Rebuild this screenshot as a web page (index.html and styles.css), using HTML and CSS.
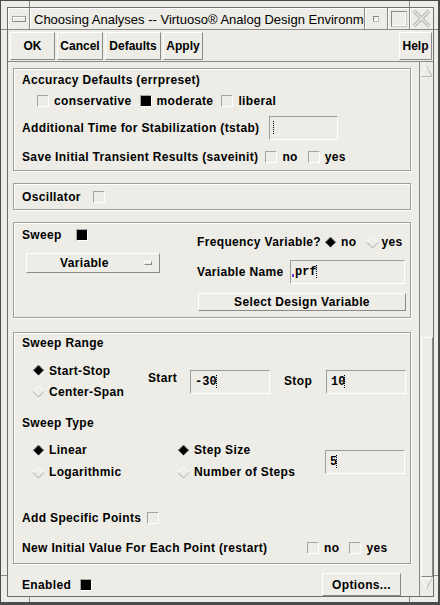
FILE: index.html
```html
<!DOCTYPE html>
<html lang="en">
<head>
<meta charset="utf-8">
<title>Choosing Analyses</title>
<link rel="stylesheet" href="styles.css">
</head>
<body>
<div class="window">
  <div class="band-h">
    <span class="corner cl"></span><span class="band-mid"></span><span class="corner cr"></span>
  </div>
  <div class="body-row">
    <div class="band-v left">
      <span class="vcorner vt"></span><span class="band-mid"></span><span class="vcorner vb"></span>
    </div>
    <div class="inner">
      <div class="titlebar">
        <div class="tcell t-menu"><span class="menu-glyph"></span></div>
        <div class="tcell t-title"><span class="title-text">Choosing Analyses -- Virtuoso® Analog Design Environment L</span></div>
        <div class="tcell t-min"><span class="min-glyph"></span></div>
        <div class="tcell t-max"><span class="max-glyph"></span></div>
        <div class="tcell t-close">
          <svg width="19" height="19" viewBox="0 0 19 19"><path d="M2 2 L17 17 M17 2 L2 17" stroke="#b4b4b4" stroke-width="3.6" fill="none"/><path d="M2 2 L17 17 M17 2 L2 17" stroke="#edece6" stroke-width="1.4" fill="none"/></svg>
        </div>
      </div>
      <div class="buttonbar">
        <button class="btn b-ok">OK</button>
        <button class="btn b-cancel">Cancel</button>
        <button class="btn b-defaults">Defaults</button>
        <button class="btn b-apply">Apply</button>
        <button class="btn b-help">Help</button>
      </div>
      <div class="scrollwin">
        <div class="content">

          <div class="box acc">
            <div class="row h">Accuracy Defaults (errpreset)</div>
            <div class="row chks">
              <span class="opt"><span class="chk"></span>conservative</span>
              <span class="opt"><span class="chk on"></span>moderate</span>
              <span class="opt"><span class="chk"></span>liberal</span>
            </div>
            <div class="row tstab">
              <span>Additional Time for Stabilization (tstab)</span>
              <span class="field f-tstab"><span class="ibeam"></span></span>
            </div>
            <div class="row save">
              <span>Save Initial Transient Results (saveinit)</span>
              <span class="opt o1"><span class="chk"></span>no</span>
              <span class="opt o2"><span class="chk"></span>yes</span>
            </div>
          </div>

          <div class="box osc">
            <div class="row osc-row"><span class="osc-lbl">Oscillator</span><span class="chk"></span></div>
          </div>

          <div class="box swp">
            <div class="col-left">
              <div class="row sweep-row"><span class="sweep-lbl">Sweep</span><span class="chk on"></span></div>
              <div class="optmenu"><span>Variable</span><span class="om-ind"></span></div>
            </div>
            <div class="col-right">
              <div class="row freq">
                <span class="freq-lbl">Frequency Variable?</span>
                <span class="opt r-opt"><svg class="dia" width="13" height="13" viewBox="0 0 13 13"><path d="M6.5 1 L12 6.5 L6.5 12 L1 6.5Z" fill="#000"/><path d="M1 6.5 L6.5 1 L12 6.5" fill="none" stroke="#8a8a8a"/><path d="M1 6.5 L6.5 12 L12 6.5" fill="none" stroke="#fff"/></svg>no</span>
                <span class="opt r-opt o-yes"><svg class="dia" width="13" height="13" viewBox="0 0 13 13"><path d="M1 6.5 L6.5 1 L12 6.5" fill="none" stroke="#fff"/><path d="M1 6.5 L6.5 12 L12 6.5" fill="none" stroke="#a6a6a6"/></svg>yes</span>
              </div>
              <div class="row varname">
                <span class="vn-lbl">Variable Name</span>
                <span class="field f-var"><span class="caret-dot"></span>prf<span class="ibeam"></span></span>
              </div>
              <button class="btn b-select">Select Design Variable</button>
            </div>
          </div>

          <div class="box rng">
            <div class="row h">Sweep Range</div>
            <div class="range-grid">
              <div class="radio-col">
                <span class="row opt r-opt rrow"><svg class="dia" width="13" height="13" viewBox="0 0 13 13"><path d="M6.5 1 L12 6.5 L6.5 12 L1 6.5Z" fill="#000"/><path d="M1 6.5 L6.5 1 L12 6.5" fill="none" stroke="#8a8a8a"/><path d="M1 6.5 L6.5 12 L12 6.5" fill="none" stroke="#fff"/></svg>Start-Stop</span>
                <span class="row opt r-opt rrow"><svg class="dia" width="13" height="13" viewBox="0 0 13 13"><path d="M1 6.5 L6.5 1 L12 6.5" fill="none" stroke="#fff"/><path d="M1 6.5 L6.5 12 L12 6.5" fill="none" stroke="#a6a6a6"/></svg>Center-Span</span>
              </div>
              <span class="lbl-start">Start</span>
              <span class="field f-num"><span class="mono">-30</span><span class="ibeam"></span></span>
              <span class="lbl-stop">Stop</span>
              <span class="field f-num"><span class="mono">10</span><span class="ibeam"></span></span>
            </div>
            <div class="row h type-h">Sweep Type</div>
            <div class="type-grid">
              <span class="row opt r-opt trow"><svg class="dia" width="13" height="13" viewBox="0 0 13 13"><path d="M6.5 1 L12 6.5 L6.5 12 L1 6.5Z" fill="#000"/><path d="M1 6.5 L6.5 1 L12 6.5" fill="none" stroke="#8a8a8a"/><path d="M1 6.5 L6.5 12 L12 6.5" fill="none" stroke="#fff"/></svg>Linear</span>
              <span class="row opt r-opt trow"><svg class="dia" width="13" height="13" viewBox="0 0 13 13"><path d="M6.5 1 L12 6.5 L6.5 12 L1 6.5Z" fill="#000"/><path d="M1 6.5 L6.5 1 L12 6.5" fill="none" stroke="#8a8a8a"/><path d="M1 6.5 L6.5 12 L12 6.5" fill="none" stroke="#fff"/></svg>Step Size</span>
              <span class="field f-num f-step"><span class="mono">5</span><span class="ibeam"></span></span>
              <span class="row opt r-opt trow"><svg class="dia" width="13" height="13" viewBox="0 0 13 13"><path d="M1 6.5 L6.5 1 L12 6.5" fill="none" stroke="#fff"/><path d="M1 6.5 L6.5 12 L12 6.5" fill="none" stroke="#a6a6a6"/></svg>Logarithmic</span>
              <span class="row opt r-opt trow"><svg class="dia" width="13" height="13" viewBox="0 0 13 13"><path d="M1 6.5 L6.5 1 L12 6.5" fill="none" stroke="#fff"/><path d="M1 6.5 L6.5 12 L12 6.5" fill="none" stroke="#a6a6a6"/></svg>Number of Steps</span>
            </div>
            <div class="row h add-row"><span class="add-lbl">Add Specific Points</span><span class="chk"></span></div>
            <div class="row h restart-row">
              <span class="restart-lbl">New Initial Value For Each Point (restart)</span>
              <span class="opt"><span class="chk"></span>no</span>
              <span class="opt o2"><span class="chk"></span>yes</span>
            </div>
          </div>

          <div class="row enabled-row">
            <span class="en-lbl">Enabled</span><span class="chk on"></span>
            <button class="btn b-options">Options...</button>
          </div>

        </div>
        <div class="scrollbar">
          <div class="arrow up"><svg width="13" height="14" viewBox="0 0 13 14"><path d="M1 12.5 L6.5 2" stroke="#fff" fill="none"/><path d="M6.5 2 L12 12.5 L1 12.5" stroke="#b9b9b9" fill="none"/></svg></div>
          <div class="trough"></div>
          <div class="slider"></div>
          <div class="arrow down"><svg width="13" height="14" viewBox="0 0 13 14"><path d="M12 1.5 L1 1.5 L6.5 12" stroke="#fff" fill="none"/><path d="M6.5 12 L12 1.5" stroke="#b9b9b9" fill="none"/></svg></div>
        </div>
      </div>
    </div>
    <div class="band-v right">
      <span class="vcorner vt"></span><span class="band-mid"></span><span class="vcorner vb"></span>
    </div>
  </div>
  <div class="band-h bottom">
    <span class="corner cl"></span><span class="band-mid"></span><span class="corner cr"></span>
  </div>
</div>
</body>
</html>
```

FILE: styles.css
```css
* { box-sizing: border-box; }
html, body { margin: 0; padding: 0; }
body {
  width: 440px; height: 605px; overflow: hidden;
  background: #edece6; color: #000;
  font: bold 12px "Liberation Sans", Arial, sans-serif;
  letter-spacing: .35px;
}
.window {
  width: 440px; height: 605px;
  display: flex; flex-direction: column;
  background: #edece6;
  border: solid #4b4b4b; border-width: 1px 2px 3px 1px;
}
.band-h { height: 6px; display: flex; flex: none; }
.band-h.bottom { height: 5px; }
.corner { width: 29px; flex: none; }
.corner.cl { border-right: 1px solid #8a8a8a; }
.corner.cr { border-left: 1px solid #8a8a8a; }
.band-mid { flex: 1; }
.body-row { flex: 1; display: flex; min-height: 0; }
.band-v { display: flex; flex-direction: column; flex: none; }
.band-v.left { width: 6px; }
.band-v.right { width: 4px; }
.vcorner { flex: none; }
.vcorner.vt { height: 23px; border-bottom: 1px solid #8a8a8a; }
.vcorner.vb { height: 22px; border-top: 1px solid #8a8a8a; }
.inner { flex: 1; min-width: 0; display: flex; flex-direction: column; border: 1px solid #6e6e6e; }

/* title bar */
.titlebar { height: 22px; flex: none; display: flex; border-bottom: 1px solid #8a8a8a; letter-spacing: 0; }
.tcell { flex: none; display: flex; align-items: center; justify-content: center; border-right: 1px solid #8a8a8a; box-shadow: inset 1px 1px #fff; }
.t-menu { width: 22px; }
.t-title { flex: 1; min-width: 0; justify-content: flex-start; padding: 2px 0 0 4px; overflow: hidden; white-space: nowrap; font: 13px "Liberation Sans", Arial, sans-serif; }
.t-min { width: 23px; }
.t-max { width: 22px; }
.t-close { width: 23px; border-right: 0; }
.menu-glyph { width: 14px; height: 6px; margin-left: 1px; border: 1px solid; border-color: #a8a8a8 #8a8a8a #8a8a8a #a8a8a8; box-shadow: inset 1px 1px #fff; }
.min-glyph { width: 6px; height: 6px; border: 1px solid; border-color: #8a8a8a #b8b8b8 #b8b8b8 #8a8a8a; box-shadow: inset -1px -1px #fff; }
.max-glyph { width: 16px; height: 16px; border: 1px solid; border-color: #8a8a8a #c4c4c4 #c4c4c4 #8a8a8a; box-shadow: inset -1px -1px #fff; }

/* button bar */
.buttonbar { height: 32px; flex: none; display: flex; align-items: flex-start; gap: 2px; padding: 2px 1px 0 2px; border-bottom: 1px solid #8a8a8a; }
.btn {
  margin: 0; padding: 0; height: 28px;
  font: bold 12px "Liberation Sans", Arial, sans-serif; letter-spacing: 0; color: #000;
  background: #edece6;
  border: 1px solid; border-color: #fff #8a8a8a #8a8a8a #fff;
  display: flex; align-items: center; justify-content: center;
}
.b-ok { width: 45px; }
.b-cancel { width: 46px; }
.b-defaults { width: 56px; }
.b-apply { width: 40px; }
.b-help { width: 33px; margin-left: auto; }

/* scrolled window */
.scrollwin { flex: 1; min-height: 0; display: flex; }
.content { flex: 1; min-width: 0; overflow: hidden; padding: 6px 0 0 5px; display: flex; flex-direction: column; align-items: flex-start; }
.scrollbar { width: 14px; flex: none; border-left: 1px solid #8a8a8a; display: flex; flex-direction: column; }
.arrow { flex: none; display: flex; justify-content: center; }
.arrow.up { height: 16px; align-items: flex-end; }
.arrow.down { height: 19px; align-items: flex-start; }
.trough { flex: 1; }
.slider { flex: none; height: 240px; margin-left: 1px; border: 1px solid; border-color: #fff #8a8a8a #8a8a8a #fff; }

/* generic */
.row { display: flex; align-items: center; white-space: nowrap; }
.opt { display: inline-flex; align-items: center; gap: 5px; }
.r-opt { gap: 4px; }
.chk { flex: none; width: 12px; height: 12px; border: 1px solid; border-color: #a4a4a4 #fff #fff #a4a4a4; background: #edece6; }
.chk.on { background: #000; }
.dia { flex: none; display: block; }
.field {
  flex: none; height: 24px; display: flex; align-items: center; padding-left: 4px;
  border: 1px solid; border-color: #9d9d9d #fff #fff #9d9d9d;
  font: bold 12px "Liberation Mono", "Courier New", monospace; letter-spacing: 0;
}
.mono { font: bold 12px "Liberation Mono", "Courier New", monospace; }
.ibeam {
  display: inline-block; flex: none; width: 3px; height: 14px; margin-left: -2px;
  background-image: linear-gradient(to bottom, #000 50%, transparent 50%);
  background-size: 1px 2px; background-repeat: repeat-y; background-position: center top;
}
.caret-dot { flex: none; width: 2px; height: 3px; background: #6b35d9; margin: 7px 0 0 0; }

.box {
  flex: none; width: 398px;
  border: 1px solid #9d9d9d;
  box-shadow: inset 1px 1px #fff, 1px 1px #fff;
  padding-left: 8px;
}

/* accuracy */
.acc { padding-bottom: 2px; }
.acc .h { height: 22px; }
.acc .chks { height: 20px; padding-left: 15px; gap: 8px; }
.acc .tstab { height: 34px; gap: 10px; }
.f-tstab { width: 69px; padding-left: 2px; }
.f-tstab .ibeam { margin-left: 0; }
.acc .save { height: 23px; }
.save .o1 { margin-left: 7px; }
.save .o2 { margin-left: 10px; }

/* oscillator */
.osc { margin-top: 12px; }
.osc-row { height: 25px; }
.osc-lbl { width: 71px; }

/* sweep */
.swp { margin-top: 12px; height: 96px; display: grid; grid-template-columns: 175px 209px; align-items: start; }
.col-left, .col-right { display: flex; flex-direction: column; align-items: flex-start; }
.sweep-row { margin-top: 5px; height: 14px; }
.sweep-lbl { width: 54px; }
.optmenu {
  margin: 11px 0 0 4px; width: 134px; height: 20px;
  display: flex; align-items: center; padding: 0 7px 0 33px;
  border: 1px solid; border-color: #fff #8a8a8a #8a8a8a #fff;
}
.om-ind { margin-left: auto; width: 8px; height: 4px; border: 1px solid; border-color: #fff #8a8a8a #8a8a8a #fff; }
.freq { margin-top: 10px; height: 18px; }
.freq-lbl { margin-right: 3px; }
.o-yes { margin-left: 10px; gap: 2px; }
.varname { margin-top: 9px; height: 24px; }
.vn-lbl { width: 93px; }
.f-var { width: 115px; padding-left: 1px; }
.f-var .caret-dot { margin-right: 1px; }
.b-select { margin: 9px 0 0 1px; width: 208px; height: 18px; letter-spacing: .35px; }

/* sweep range */
.rng { margin-top: 14px; height: 232px; }
.rng .h { height: 20px; }
.range-grid { margin-top: 7px; display: grid; grid-template-columns: 126px 42px 80px 56px 80px; align-items: start; }
.radio-col { margin-left: 10px; display: flex; flex-direction: column; }
.rrow { height: 21px; }
.lbl-start { margin-top: 11px; line-height: 14px; }
.lbl-stop { margin-top: 14px; line-height: 14px; padding-left: 14px; }
.f-num { margin-top: 10px; width: 80px; }
.type-h { margin-top: 11px; }
.type-grid { margin-top: 6px; display: grid; grid-template-columns: 145px 148px 80px; grid-template-rows: 22px 22px; padding-left: 10px; }
.trow { height: 22px; }
.f-step { grid-row: 1 / span 2; grid-column: 3; margin-top: 11px; }
.add-row { margin-top: 25px; }
.add-lbl { width: 125px; }
.restart-row { margin-top: 10px; }
.restart-lbl { width: 285px; }
.restart-row .o2 { margin-left: 10px; }

/* enabled row */
.enabled-row { margin-top: 9px; height: 23px; width: 398px; padding-left: 9px; }
.en-lbl { margin-right: 9px; }
.b-options { margin-left: auto; margin-right: 10px; width: 79px; height: 23px; letter-spacing: .35px; }
```
